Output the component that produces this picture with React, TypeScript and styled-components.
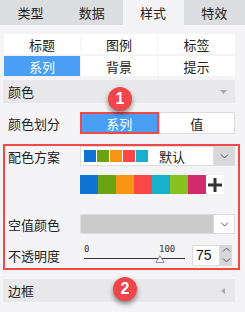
import React from "react";
import styled, { createGlobalStyle } from "styled-components";

const GlobalStyle = createGlobalStyle`
  html, body {
    margin: 0;
    padding: 0;
    background: #f4f4f6;
  }
  body {
    font-family: "Noto Sans CJK SC", "Noto Sans", sans-serif;
    font-size: 13px;
    color: #222;
  }
`;

const Page = styled.div`
  position: relative;
  width: 245px;
  height: 312px;
  overflow: hidden;
  background: #f4f4f6;
`;

const TabBar = styled.div`
  display: flex;
  height: 25px;
  background: #dcdde0;
`;

const Tab = styled.div<{ $active?: boolean }>`
  flex: 1;
  display: flex;
  align-items: center;
  justify-content: center;
  background: ${(p) => (p.$active ? "#f4f4f6" : "transparent")};
  line-height: 1;
`;

const Content = styled.div`
  display: flex;
  flex-direction: column;
  padding: 0 10px 0 3px;
`;

const SubTabs = styled.div`
  display: grid;
  grid-template-columns: 76px 76px 77px;
  grid-auto-rows: 20px;
  gap: 2px 1px;
  margin: 9px 0 0 1px;
`;

const SubTab = styled.div<{ $active?: boolean }>`
  display: flex;
  align-items: center;
  justify-content: center;
  background: ${(p) => (p.$active ? "#4a9ff5" : "#fff")};
  color: ${(p) => (p.$active ? "#fff" : "#222")};
  line-height: 1;
`;

const SectionHeader = styled.div<{ $top: number }>`
  display: flex;
  align-items: center;
  justify-content: space-between;
  height: 23px;
  margin-top: ${(p) => p.$top}px;
  padding: 0 7px 0 5px;
  background: #e8e8ea;
  line-height: 1;
`;

const Row = styled.div<{ $top?: number }>`
  display: flex;
  align-items: center;
  margin-top: ${(p) => p.$top ?? 0}px;
`;

const Label = styled.div`
  width: 72px;
  padding-left: 5px;
  flex-shrink: 0;
  line-height: 1;
`;

const ToggleGroup = styled.div`
  display: flex;
  width: 155px;
  height: 22px;
`;

const ToggleButton = styled.div<{ $active?: boolean }>`
  flex: 1;
  display: flex;
  align-items: center;
  justify-content: center;
  box-sizing: border-box;
  background: ${(p) => (p.$active ? "#4a9ff5" : "#fff")};
  color: ${(p) => (p.$active ? "#fff" : "#222")};
  border: ${(p) => (p.$active ? "2px solid #f24848" : "1px solid #dcdcdc")};
  line-height: 1;
`;

const Highlight = styled.div`
  display: flex;
  flex-direction: column;
  margin: 10px -5px 0 0;
  padding: 0 3px 0 0;
  border: 2px solid #f24848;
  border-top-width: 2px;
`;

const InnerLabel = styled(Label)`
  width: 72px;
  padding-left: 3px;
`;

const Select = styled.div<{ $fill?: string }>`
  display: flex;
  align-items: stretch;
  width: 155px;
  height: 20px;
  box-sizing: border-box;
  border: 1px solid #dcdcdc;
  background: ${(p) => p.$fill ?? "#fff"};
`;

const SelectBody = styled.div`
  flex: 1;
  display: flex;
  align-items: center;
  padding-left: 3px;
  gap: 1px;
`;

const MiniSwatch = styled.span<{ $c: string }>`
  width: 12px;
  height: 12px;
  background: ${(p) => p.$c};
`;

const SelectText = styled.span`
  margin-left: 10px;
  line-height: 1;
`;

const DropButton = styled.div<{ $bg: string }>`
  width: 20px;
  display: flex;
  align-items: center;
  justify-content: center;
  background: ${(p) => p.$bg};
  border-left: 1px solid #dcdcdc;
`;

const Palette = styled.div`
  display: flex;
  margin: 9px 0 0 75px;
  height: 19px;
`;

const Swatch = styled.span<{ $c: string }>`
  width: 18px;
  height: 19px;
  background: ${(p) => p.$c};
`;

const AddButton = styled.div`
  width: 18px;
  height: 19px;
  background: #fff;
  display: flex;
  align-items: center;
  justify-content: center;
`;

const Slider = styled.div`
  position: relative;
  width: 101px;
  height: 22px;
  margin-left: 4px;
  font-family: "DejaVu Sans Mono", monospace;
  font-size: 9px;
  color: #333;
`;

const SliderMark = styled.span<{ $left: number }>`
  position: absolute;
  top: 1px;
  left: ${(p) => p.$left}px;
  line-height: 1;
`;

const SliderTrack = styled.div`
  position: absolute;
  top: 14px;
  left: 0;
  right: 0;
  height: 1px;
  background: #333;
`;

const SliderThumb = styled.svg`
  position: absolute;
  top: 11px;
  left: 71px;
`;

const NumberBox = styled.div`
  display: flex;
  margin-left: 7px;
  height: 21px;
`;

const NumberInput = styled.div`
  width: 28px;
  box-sizing: border-box;
  border: 1px solid #dcdcdc;
  background: #fff;
  display: flex;
  align-items: center;
  padding-left: 3px;
  font-family: "Liberation Sans", Arial, sans-serif;
  font-size: 14px;
  color: #111;
`;

const Spinner = styled.div`
  width: 12px;
  background: #d8d8da;
  display: flex;
  flex-direction: column;
  align-items: center;
  justify-content: space-around;
`;

const Badge = styled.div<{ $x: number; $y: number }>`
  position: absolute;
  left: ${(p) => p.$x - 12}px;
  top: ${(p) => p.$y - 12}px;
  width: 24px;
  height: 24px;
  border-radius: 50%;
  background: #f0454a;
  color: #fff;
  font-family: "Liberation Sans", Arial, sans-serif;
  font-weight: bold;
  font-size: 16px;
  display: flex;
  align-items: center;
  justify-content: center;
  box-shadow: 0 3px 5px rgba(0, 0, 0, 0.45);
`;

const Chevron = ({ up }: { up?: boolean }) => (
  <svg width="9" height="5" viewBox="0 0 9 5">
    <path
      d={up ? "M1 4.5 L4.5 1 L8 4.5" : "M1 0.5 L4.5 4 L8 0.5"}
      fill="none"
      stroke="#555"
      strokeWidth="1"
    />
  </svg>
);

const Caret = ({ left }: { left?: boolean }) => (
  <svg width="9" height="8" viewBox="0 0 9 8">
    <path d={left ? "M6 1 L2 4 L6 7 Z" : "M1 2 L8 2 L4.5 6 Z"} fill="#a9a9ab" />
  </svg>
);

const palette = ["#1173d1", "#6aa412", "#f79412", "#fd4646", "#17b0cd", "#86c11f", "#d12b6b"];

export default function App() {
  return (
    <Page>
      <GlobalStyle />
      <TabBar>
        <Tab>类型</Tab>
        <Tab>数据</Tab>
        <Tab $active>样式</Tab>
        <Tab>特效</Tab>
      </TabBar>
      <Content>
        <SubTabs>
          <SubTab>标题</SubTab>
          <SubTab>图例</SubTab>
          <SubTab>标签</SubTab>
          <SubTab $active>系列</SubTab>
          <SubTab>背景</SubTab>
          <SubTab>提示</SubTab>
        </SubTabs>

        <SectionHeader $top={4}>
          颜色
          <Caret />
        </SectionHeader>

        <Row $top={9}>
          <Label>颜色划分</Label>
          <ToggleGroup>
            <ToggleButton $active>系列</ToggleButton>
            <ToggleButton>值</ToggleButton>
          </ToggleGroup>
        </Row>

        <Highlight>
          <Row>
            <InnerLabel>配色方案</InnerLabel>
            <Select>
              <SelectBody>
                {palette.slice(0, 5).map((c) => (
                  <MiniSwatch key={c} $c={c} />
                ))}
                <SelectText>默认</SelectText>
              </SelectBody>
              <DropButton $bg="#d8d8da">
                <Chevron />
              </DropButton>
            </Select>
          </Row>
          <Palette>
            {palette.map((c) => (
              <Swatch key={c} $c={c} />
            ))}
            <AddButton>
              <svg width="14" height="14" viewBox="0 0 14 14">
                <path d="M7 0 V14 M0 7 H14" stroke="#333" strokeWidth="3" />
              </svg>
            </AddButton>
          </Palette>
          <Row $top={20}>
            <InnerLabel>空值颜色</InnerLabel>
            <Select $fill="#cbcbcb">
              <SelectBody />
              <DropButton $bg="#fff">
                <Chevron />
              </DropButton>
            </Select>
          </Row>
          <Row $top={10}>
            <InnerLabel>不透明度</InnerLabel>
            <Slider>
              <SliderMark $left={0}>0</SliderMark>
              <SliderMark $left={75}>100</SliderMark>
              <SliderTrack />
              <SliderThumb width="10" height="8" viewBox="0 0 10 8">
                <path d="M5 0.8 L9.2 7.4 L0.8 7.4 Z" fill="#fff" stroke="#888" strokeWidth="1" />
              </SliderThumb>
            </Slider>
            <NumberBox>
              <NumberInput>75</NumberInput>
              <Spinner>
                <Chevron up />
                <Chevron />
              </Spinner>
            </NumberBox>
          </Row>
          <Row $top={2} />
        </Highlight>

        <SectionHeader $top={9}>
          边框
          <Caret left />
        </SectionHeader>
      </Content>

      <Badge $x={120} $y={99}>1</Badge>
      <Badge $x={125} $y={289}>2</Badge>
    </Page>
  );
}
